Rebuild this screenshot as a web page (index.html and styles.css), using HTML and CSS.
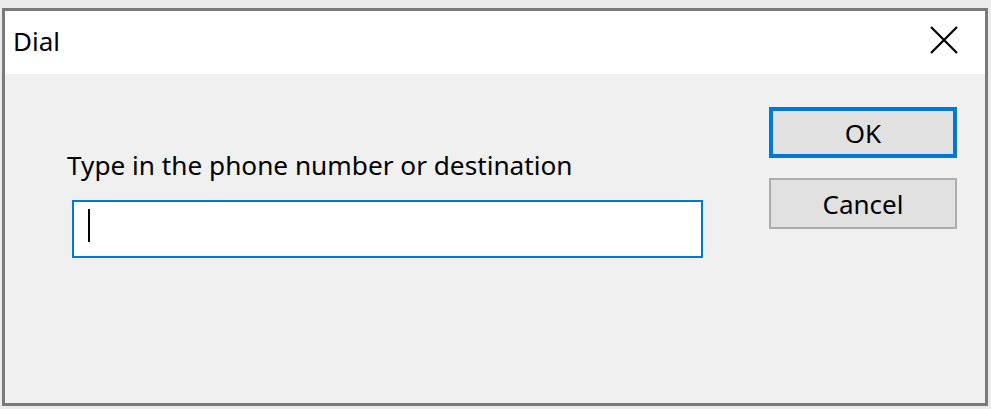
FILE: index.html
```html
<!DOCTYPE html>
<html>
<head>
<meta charset="utf-8">
<link rel="stylesheet" href="styles.css">
</head>
<body>
<div class="window">
  <div class="titlebar">
    <span class="title">Dial</span>
    <svg class="close" width="30" height="30" viewBox="0 0 30 30"><path d="M2 2 L28 28 M28 2 L2 28" stroke="#000" stroke-width="2.2" fill="none"/></svg>
  </div>
  <div class="client">
    <div class="form">
      <div class="label">Type in the phone number or destination</div>
      <div class="input"><span class="caret"></span></div>
    </div>
    <div class="buttons">
      <div class="btn default">OK</div>
      <div class="btn">Cancel</div>
    </div>
  </div>
</div>
</body>
</html>
```
FILE: styles.css
```css
html, body {
  margin: 0;
  padding: 0;
  background: #ececec;
  width: 991px;
  height: 409px;
  overflow: hidden;
}
body {
  padding: 8px 3px 0 2px;
  box-sizing: border-box;
  font-family: "Noto Sans", "Open Sans", sans-serif;
}
.window {
  width: 986px;
  height: 398px;
  box-sizing: border-box;
  border: 3px solid #7a7a7a;
  background: #f0f0f0;
  display: flex;
  flex-direction: column;
}
.titlebar {
  height: 63px;
  background: #ffffff;
  display: flex;
  align-items: center;
  justify-content: space-between;
  padding: 0 26px 0 8px;
  flex: none;
}
.title {
  font-size: 26px;
  color: #000;
  margin-top: -4px;
}
.close {
  display: block;
  margin-top: -6px;
}
.client {
  flex: 1;
  display: flex;
  justify-content: space-between;
  padding: 33px 28px 0 62px;
}
.form {
  padding-top: 42px;
}
.label {
  font-size: 26.2px;
  color: #000;
  line-height: 32px;
}
.input {
  margin: 19px 0 0 5px;
  width: 631px;
  height: 58px;
  box-sizing: border-box;
  border: 2px solid #0078d7;
  background: #fff;
  padding: 7px 0 0 14px;
}
.caret {
  display: block;
  width: 2px;
  height: 33px;
  background: #000;
}
.buttons {
  display: flex;
  flex-direction: column;
  gap: 20px;
}
.btn {
  width: 188px;
  height: 51px;
  box-sizing: border-box;
  border: 2px solid #adadad;
  background: #e1e1e1;
  display: flex;
  align-items: center;
  justify-content: center;
  font-size: 26px;
  color: #000;
}
.btn.default {
  border: 4px solid #0078d7;
}
```
